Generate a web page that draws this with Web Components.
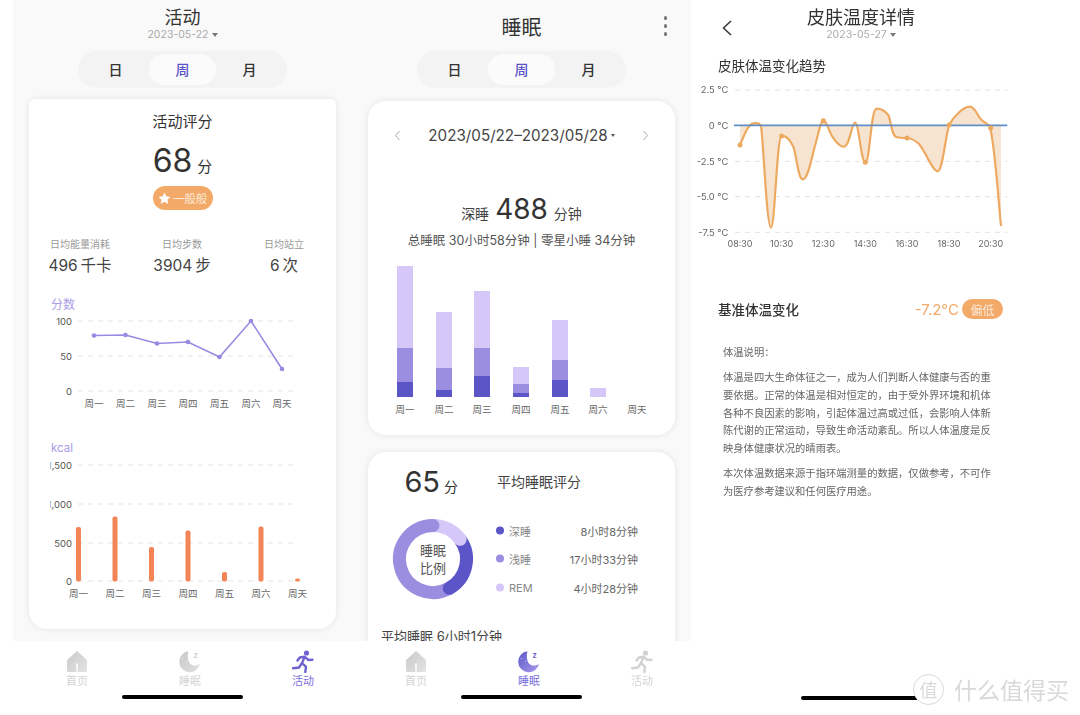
<!DOCTYPE html>
<html lang="zh"><head><meta charset="utf-8"><title>健康</title>
<style>
html,body{margin:0;padding:0;background:#fff}
body{width:1080px;height:715px;overflow:hidden;font-family:Inter,"Noto Sans CJK SC","Noto Sans",sans-serif;color:#333}
</style></head>
<body>
<health-app></health-app>
<script>
const def=(name,css,html,setup)=>{customElements.define(name,class extends HTMLElement{
  connectedCallback(){ if(this.shadowRoot)return; const r=this.attachShadow({mode:'open'});
    const a=n=>this.getAttribute(n)||'';
    r.innerHTML=`<style>${css}</style>`+(typeof html==='function'?html(a):html); if(setup)setup(r,a);}
});};
const PURPLE='#5b55c8',LAV='#9b8ee0',LILAC='#d5c8f9',ORANGE='#f3a968',DAYS=['周一','周二','周三','周四','周五','周六','周天'];

def('top-bar',`:host{display:grid;grid-template-columns:1fr auto 1fr;align-items:center;height:51px;box-sizing:border-box}
 .m{display:flex;flex-direction:column;align-items:center;grid-column:2}
 .t{font-size:18px;line-height:22px;color:#333;margin-top:1px}.big{font-size:20px;line-height:26px;margin-top:5px}
 .d{font-size:10.500px;line-height:13px;color:#aaa;margin-top:-1px;margin-bottom:4px;display:flex;align-items:center;gap:3px}
 .d i{border:3px solid transparent;border-top:4px solid #777;border-bottom:0;display:block;margin-top:1px}
 .l{grid-column:1;grid-row:1}.r{grid-column:3;grid-row:1;justify-self:end}`,
 a=>`<div class="l"><slot name="left"></slot></div><div class="m"><div class="t ${a('date')?'':'big'}">${a('title')}</div>${a('date')?`<div class="d">${a('date')}<i></i></div>`:''}</div><div class="r"><slot name="right"></slot></div>`);

def('seg-tabs',`:host{display:grid;grid-template-columns:repeat(3,67px);justify-content:center;width:209px;height:37px;box-sizing:border-box;margin:0 auto;padding:3px 0;background:#f3f3f3;border-radius:19px}
 span{display:flex;align-items:center;justify-content:center;font-size:14px;font-weight:500;color:#333;border-radius:16px;padding-bottom:2px;box-sizing:border-box}
 .on{background:#fbfbfb;color:${PURPLE}}`,`<span>日</span><span class="on">周</span><span>月</span>`);

def('ui-card',`:host{display:block;background:#fff;margin:0 16px;border-radius:18px;box-shadow:0 0 6px rgba(0,0,0,.09)}`,`<slot></slot>`);

def('stat-item',`:host{display:flex;flex-direction:column;align-items:center}
 .k{font-size:10px;line-height:14px;color:#999}.v{font-size:15.500px;line-height:22px;color:#444;margin-top:4px;word-spacing:-1.500px}`,
 a=>`<div class="k">${a('k')}</div><div class="v">${a('v')}</div>`);

def('activity-card',`:host{display:block;height:530px;overflow:hidden}
 .h{font-size:15px;line-height:20px;text-align:center;color:#333;padding-top:13px}
 .s{display:flex;justify-content:center;align-items:baseline;gap:5px;margin-top:8px;line-height:42px;color:#333}
 .s b{font-weight:400;font-size:32px}.s span{font-size:15px}
 .b{display:flex;width:60px;height:24px;margin:-2px auto 0;border-radius:12px;background:${ORANGE};align-items:center;justify-content:center;gap:2px;color:#fbe9d8;font-size:11.500px}
 .g{display:grid;grid-template-columns:repeat(3,102px);margin-top:27px}
 svg{display:block}`,
 `<div class="h">活动评分</div><div class="s"><b>68</b><span>分</span></div>
 <div class="b"><svg width="13" height="13" viewBox="0 0 24 24"><path fill="#fff" d="M12 1l3.400 7 7.600 1-5.600 5.300 1.500 7.700L12 18.200 5.100 22l1.500-7.700L1 9l7.600-1z"/></svg>一般般</div>
 <div class="g"><stat-item k="日均能量消耗" v="496 千卡"></stat-item><stat-item k="日均步数" v="3904 步"></stat-item><stat-item k="日均站立" v="6 次"></stat-item></div>
 <score-line></score-line><kcal-bars></kcal-bars>`);

const grid=(ys,x1,x2)=>ys.map(y=>`<line x1="${x1}" x2="${x2}" y1="${y}" y2="${y}" stroke="#e4e4e4" stroke-width="1" stroke-dasharray="5 5"/>`).join('');
const ylab=(arr,x)=>arr.map(([t,y])=>`<text x="${x}" y="${y+3.500}" text-anchor="end" font-size="9.500" fill="#555">${t}</text>`).join('');
const xlab=(xs,y,fs=9.500)=>xs.map((x,i)=>`<text x="${x}" y="${y}" text-anchor="middle" font-size="${fs}" fill="#666">${DAYS[i]}</text>`).join('');

def('score-line',`:host{display:block;margin-top:18px}svg{display:block;overflow:hidden}`,()=>{
 const xs=[94,125.500,157,188,219.500,251,282],ys=[335.500,335,343.500,342,357,321,369];
 return `<svg width="307" height="117" viewBox="29 295 307 117">
 <text x="51" y="309" font-size="12" fill="#a99be8">分数</text>
 ${grid([321,356,391],78,297)}${ylab([[100,321],[50,356],[0,391]],72)}
 <polyline points="${xs.map((x,i)=>x+','+ys[i]).join(' ')}" fill="none" stroke="#978ae2" stroke-width="1.600"/>
 ${xs.map((x,i)=>`<circle cx="${x}" cy="${ys[i]}" r="2.300" fill="#978ae2"/>`).join('')}
 ${xlab(xs,406.500)}</svg>`});

def('kcal-bars',`:host{display:block;margin-top:27px}svg{display:block}`,()=>{
 const xs=[78.500,115,151.500,188,224.500,261,297.500],ts=[527,516.500,547,530.500,572,526.500,578.500];
 return `<svg width="307" height="160" viewBox="29 439 307 160"><defs><clipPath id="c"><rect x="50.500" y="439" width="285" height="160"/></clipPath></defs>
 <text x="51" y="452" font-size="11.500" fill="#a99be8">kcal</text>
 ${grid([465,504,543,581],78,297)}<g clip-path="url(#c)">${ylab([['1,500',465],['1,000',504],[500,543],[0,581]],72)}</g>
 ${xs.map((x,i)=>`<rect x="${x-2.500}" y="${ts[i]}" width="5" height="${581.500-ts[i]}" rx="2" fill="#f28455"/>`).join('')}
 ${xlab(xs,597)}</svg>`});

def('sleep-card',`:host{display:block;height:334px;overflow:hidden}
 .d{display:grid;grid-template-columns:1fr auto 1fr;align-items:center;padding:24px 26px 0;height:20px;font-size:15.200px;color:#444}
 .d span{display:flex;align-items:center;gap:3px}.d i{border:2.500px solid transparent;border-top:3.500px solid #555;border-bottom:0;display:block}
 .d svg:last-child{justify-self:end}
 .b{display:flex;justify-content:center;align-items:baseline;gap:6px;margin-top:44px;line-height:40px;color:#444;font-size:14px}
 .b b{font-weight:400;font-size:28px;color:#333}
 .u{text-align:center;font-size:12.500px;line-height:18px;color:#555;margin-top:-2px}
 sleep-bars{margin-top:10px}`,
 `<div class="d"><svg width="7" height="11" viewBox="0 0 7 11"><path d="M5.500 1L1.500 5.500l4 4.500" fill="none" stroke="#aaa" stroke-width="1"/></svg><span>2023/05/22–2023/05/28<i></i></span><svg width="7" height="11" viewBox="0 0 7 11"><path d="M1.500 1l4 4.500-4 4.500" fill="none" stroke="#aaa" stroke-width="1"/></svg></div>
 <div class="b">深睡 <b>488</b> 分钟</div><div class="u">总睡眠 30小时58分钟 | 零星小睡 34分钟</div><sleep-bars></sleep-bars>`);

def('sleep-bars',`:host{display:block}svg{display:block}`,()=>{
 const xs=[397,436,474,513,552,590],c=[405,444,482,521,560,598,637];
 const d=[[266,348,382],[312,368,390],[291,348,376],[367,384,393],[320,360,380],[388,397,397]];
 return `<svg width="307" height="160" viewBox="368 260 307 160">${d.map((r,i)=>`
  <rect x="${xs[i]}" y="${r[0]}" width="16" height="${r[1]-r[0]}" fill="${LILAC}"/>
  <rect x="${xs[i]}" y="${r[1]}" width="16" height="${r[2]-r[1]}" fill="${LAV}"/>
  <rect x="${xs[i]}" y="${r[2]}" width="16" height="${397-r[2]}" fill="${PURPLE}"/>`).join('')}
  ${xlab(c,413,9.500)}</svg>`});

def('sleep-donut',`:host{display:block}svg{display:block}
 text{font-size:13px;fill:#555;text-anchor:middle}`,()=>{
 const cx=50,cy=50,r=33.500,pt=a=>{const t=(a-90)*Math.PI/180;return [cx+r*Math.cos(t),cy+r*Math.sin(t)]};
 const arc=(a,b,c)=>{const p=pt(a),q=pt(b);return `<path d="M${p[0]} ${p[1]}A${r} ${r} 0 ${b-a>180?1:0} 1 ${q[0]} ${q[1]}" fill="none" stroke="${c}" stroke-width="13"/>`};
 const cap=(a,c)=>{const p=pt(a);return `<circle cx="${p[0]}" cy="${p[1]}" r="6.500" fill="${c}"/>`};
 return `<svg width="100" height="100" viewBox="0 0 100 100">${arc(0,54,LILAC)}${arc(54,151,PURPLE)}${arc(151,359.900,LAV)}${cap(54,LILAC)}${cap(151,PURPLE)}${cap(360,LAV)}
 <text x="50" y="46">睡眠</text><text x="50" y="64">比例</text></svg>`});

def('legend-row',`:host{display:grid;grid-template-columns:8px 1fr auto;align-items:center;gap:0 5px;height:28.500px;font-size:11px}
 i{width:8px;height:8px;border-radius:50%;background:var(--c)}.k{color:#888}.v{color:#666}`,
 a=>`<i style="--c:${a('c')}"></i><span class="k">${a('k')}</span><span class="v">${a('v')}</span>`);

def('score-card',`:host{display:block;height:215px}
 .t{display:grid;grid-template-columns:129px 1fr;align-items:center;padding-top:9px;height:40px}
 .n{display:flex;justify-content:flex-end;align-items:baseline;gap:4px;padding-right:39px;color:#333;font-size:14px}.n b{font-size:29px;font-weight:400}
 .h{font-size:14px;color:#444}
 .c{display:grid;grid-template-columns:113px 142px;padding-left:15px;margin-top:8px;align-items:center}
 .c>div{transform:translateY(-.5px)}
 .f{font-size:13px;color:#444;padding-left:13px;margin-top:18px;line-height:18px}`,
 `<div class="t"><div class="n"><b>65</b>分</div><div class="h">平均睡眠评分</div></div>
 <div class="c"><sleep-donut></sleep-donut><div><legend-row c="${PURPLE}" k="深睡" v="8小时8分钟"></legend-row><legend-row c="${LAV}" k="浅睡" v="17小时33分钟"></legend-row><legend-row c="${LILAC}" k="REM" v="4小时28分钟"></legend-row></div></div>
 <div class="f">平均睡眠 6小时1分钟</div>`);

const home=()=>`<svg width="20" height="22" viewBox="0 0 20 22"><defs><linearGradient id="h" x1="0" y1="0" x2="1" y2="1"><stop offset="0" stop-color="#c9c9c9"/><stop offset="1" stop-color="#e3e3e3"/></linearGradient></defs><path fill="url(#h)" d="M0 9.500L10 .5l10 9V20a1.500 1.500 0 0 1-1.500 1.500h-17A1.500 1.500 0 0 1 0 20z"/><rect x="9" y="13" width="2" height="8" fill="#f6f6f6"/></svg>`;
const moon=on=>{const a=on?'#5b55c8':'#c8c8c8',b=on?'#a79cec':'#e0e0e0',id='m'+(on?1:0);return `<svg width="24" height="22" viewBox="0 0 24 22"><defs><linearGradient id="${id}" x1="0" y1="0" x2="1" y2="1"><stop offset="0" stop-color="${a}"/><stop offset="1" stop-color="${b}"/></linearGradient></defs><path fill="url(#${id})" d="M10.500 .8A10.500 10.500 0 1 0 22 13.300C20 15.500 13.500 16.500 11 11.500 9.500 8 9.500 4 10.500 .8z"/><path d="M3.500 8.500l2-.8M8 10.500l1.500.3" stroke="#fff" stroke-width=".7" fill="none" opacity=".7"/><text x="15.500" y="7.800" font-size="7.500" font-weight="700" fill="${on?'#6d62d0':'#d0d0d0'}">z</text></svg>`};
const run=c=>`<svg width="22" height="23" viewBox="0 0 22 23"><circle cx="14.500" cy="3" r="2.600" fill="${c}"/><path d="M5.500 10.500L7.800 7.500 12.800 6.800 16.500 10 20.500 9.800M12.800 6.800L10 13 14 16.800 13.300 22M10 13L7 17.500 1 18.200" fill="none" stroke="${c}" stroke-width="2.400" stroke-linecap="round" stroke-linejoin="round"/></svg>`;

def('tab-bar',`:host{display:block;height:74px;background:#fff;position:relative;z-index:1}
 .g{display:grid;grid-template-columns:repeat(3,98px);gap:15px;padding:9px 0 0 15px;height:50px;box-sizing:border-box}
 a{display:flex;flex-direction:column;align-items:center;font-size:11px;line-height:14px;color:#d4d4d4}
 a svg{display:block;height:23px;margin-bottom:1px}.on{color:#7b70dc}`,
 a=>{const t=a('active');return `<div class="g"><a>${home()}首页</a><a class="${t=='sleep'?'on':''}">${moon(t=='sleep')}睡眠</a><a class="${t=='run'?'on':''}">${run(t=='run'?'#6d62d0':'#d2d2d2')}活动</a></div><home-bar></home-bar>`});

def('home-bar',`:host{display:block;width:121px;height:4px;margin:4px auto 0;border-radius:2px;background:#000}`,``);

def('phone-screen',`:host{display:flex;flex-direction:column;width:339px;height:715px;background:#fff;overflow:hidden}
 main{height:641px;background:#f9f9f9;overflow:hidden;display:block;flex:none}`,`<main><slot></slot></main><slot name="tabs"></slot>`);

def('kebab-menu',`:host{display:flex;flex-direction:column;gap:4.500px;padding:1px 24px 0 0}i{width:3.500px;height:3.500px;border-radius:50%;background:#777}`,`<i></i><i></i><i></i>`);
def('back-arrow',`:host{display:block;padding:4px 0 0 22px}svg{display:block}`,`<svg width="10" height="16" viewBox="0 0 10 16"><path d="M9 1L1.500 8 9 15" fill="none" stroke="#333" stroke-width="1.500"/></svg>`);

def('temp-chart',`:host{display:block}svg{display:block}`,()=>{
 const line='M135 435C150 400 160 372 175 370C190 368 195 372 198 378C205 420 215 683 228 683C240 683 245 410 260 408C272 406 285 420 295 440C305 470 310 538 323 538C340 538 350 470 362 430C370 400 378 362 385 362C395 362 402 395 412 410C422 425 435 442 447 440C465 437 470 368 480 368C492 368 498 487 511 487C525 487 527 326 545 326C560 326 572 335 580 345C590 370 590 408 605 411C615 414 625 414 636 414C650 414 660 422 670 430C690 450 712 514 728 514C742 514 750 420 762 375C775 350 805 320 825 320C840 320 848 350 860 360C870 370 880 372 885 380C900 440 912 620 918 678';
 const lab=[['2.5 °C',270],['0 °C',376],['-2.5 °C',484],['-5.0 °C',590],['-7.5 °C',697]];
 const xs=[135,260,385,511,636,762,887],ts=['08:30','10:30','12:30','14:30','16:30','18:30','20:30'],dots=[435,408,362,487,414,375,384];
 return `<svg width="386" height="180" viewBox="-3 225 1158 540">
 ${lab.map(([,y])=>`<line x1="120" x2="937" y1="${y}" y2="${y}" stroke="#e2e2e2" stroke-width="3" stroke-dasharray="15 15"/>`).join('')}
 ${lab.map(([t,y])=>`<text x="100" y="${y+10}" text-anchor="end" font-size="28" fill="#666">${t}</text>`).join('')}
 <path d="${line}L918 376L135 376Z" fill="#f6e4d0"/>
 <path d="${line}" fill="none" stroke="#eda95f" stroke-width="6.500"/>
 <line x1="117" x2="937" y1="376" y2="376" stroke="#5f8fc6" stroke-width="5"/>
 ${xs.map((x,i)=>`<circle cx="${x}" cy="${dots[i]}" r="7.500" fill="#eda95f"/>`).join('')}
 ${xs.map((x,i)=>`<text x="${x}" y="742" text-anchor="middle" font-size="27" fill="#666">${ts[i]}</text>`).join('')}
 </svg>`});

def('temp-screen',`:host{display:block;width:386px;height:715px;background:#fff;position:relative;overflow:hidden}
 .w{width:322px;margin-left:6px}.h{font-size:13.500px;line-height:18px;color:#333;padding:6px 0 0 24px}
 .r{display:grid;grid-template-columns:1fr auto auto;align-items:center;gap:3px;padding:0 77px 0 24px;height:20px;margin-top:44px}
 .r b{font-weight:500;font-size:13.500px;color:#333}.r span{font-size:15px;color:${ORANGE}}
 .r em{font-style:normal;width:41px;height:20px;border-radius:10px;background:${ORANGE};color:#fbe9d8;font-size:12px;display:flex;align-items:center;justify-content:center}
 .t{padding:25px 0 0 29px;font-size:10.300px;line-height:17.700px;color:#666;white-space:nowrap}.t p{margin:0 0 7.500px}
 .bar{position:absolute;left:107px;top:696px;width:121px;height:4px;border-radius:2px;background:#000}
 .wm{position:absolute;left:219px;top:671px;display:flex;align-items:center;gap:10px;color:#d9d9d9;font-size:23px;height:36px}
 .c{width:31px;height:31px;border-radius:50%;background:#fff;border:1px solid #d9d9d9;display:flex;align-items:center;justify-content:center;font-size:18px;box-sizing:border-box}`,
 `<div class="w"><top-bar title="皮肤温度详情" date="2023-05-27"><back-arrow slot="left"></back-arrow></top-bar></div>
 <div class="h">皮肤体温变化趋势</div><temp-chart></temp-chart>
 <div class="r"><b>基准体温变化</b><span>-7.2°C</span><em>偏低</em></div>
 <div class="t"><p>体温说明：</p><p>体温是四大生命体征之一，成为人们判断人体健康与否的重<br>要依据。正常的体温是相对恒定的，由于受外界环境和机体<br>各种不良因素的影响，引起体温过高或过低，会影响人体新<br>陈代谢的正常运动，导致生命活动紊乱。所以人体温度是反<br>映身体健康状况的晴雨表。</p><p>本次体温数据来源于指环端测量的数据，仅做参考，不可作<br>为医疗参考建议和任何医疗用途。</p></div>
 <div class="bar"></div><div class="wm"><span class="c">值</span><span>什么值得买</span></div>`);

def('health-app',`:host{display:flex;width:1080px;height:715px;padding-left:13px;box-sizing:border-box;filter:blur(.3px)}
 temp-screen{margin-left:3px}
 .s{margin-top:11px}.s3{margin-top:13px}.s2{margin-top:17px}
 .first{border-radius:6px 6px 18px 18px}`,
 `<phone-screen><top-bar title="活动" date="2023-05-22"></top-bar><seg-tabs></seg-tabs><ui-card class="s first"><activity-card></activity-card></ui-card><tab-bar slot="tabs" active="run"></tab-bar></phone-screen>
 <phone-screen><top-bar title="睡眠"><kebab-menu slot="right"></kebab-menu></top-bar><seg-tabs></seg-tabs><ui-card class="s s3"><sleep-card></sleep-card></ui-card><ui-card class="s2"><score-card></score-card></ui-card><tab-bar slot="tabs" active="sleep"></tab-bar></phone-screen>
 <temp-screen></temp-screen>`);
</script>
</body></html>
